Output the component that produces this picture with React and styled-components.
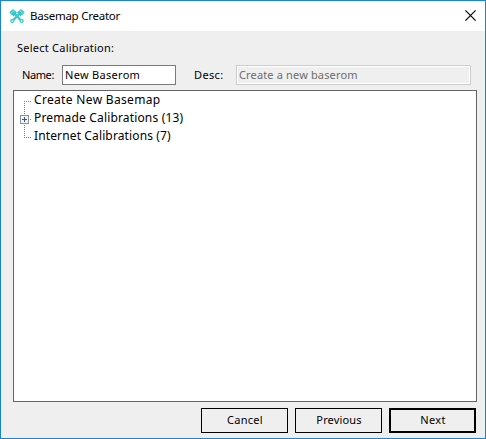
import React from "react";
import styled, { createGlobalStyle } from "styled-components";

const Global = createGlobalStyle`
  * { box-sizing: border-box; }
  body { margin: 0; overflow: hidden; }
`;

const Window = styled.div`
  width: 486px;
  height: 439px;
  display: flex;
  flex-direction: column;
  border: 1px solid #1883d7;
  background: #efefef;
  color: #000;
  font: 11px/18px "Noto Sans", sans-serif;
`;

const Text = styled.span`
  display: block;
  white-space: pre;
  letter-spacing: ${(p) => p.$tracking || 0}px;
`;

const TitleBar = styled.header`
  height: 30px;
  display: flex;
  align-items: center;
  padding: 0 9px 0 8px;
  background: #fff;
  font-size: 11.5px;
`;

const Title = styled(Text)`
  flex: 1;
  margin-left: 5px;
`;

const CloseButton = styled.button`
  width: 11px;
  height: 11px;
  margin-top: -1px;
  padding: 0;
  border: 0;
  background: none;
  svg { display: block; }
`;

const Heading = styled.div`
  height: 34px;
  padding: 8px 0 0 16px;
`;

const Form = styled.div`
  height: 20px;
  display: flex;
  align-items: center;
  padding-left: 21px;
`;

const FieldLabel = styled(Text)`
  width: ${(p) => p.$width}px;
`;

const Field = styled.div`
  width: ${(p) => p.$width}px;
  height: 20px;
  display: flex;
  align-items: center;
  padding-left: 2px;
  border: 1px solid ${(p) => (p.$disabled ? "#cccccc" : "#7a7a7a")};
  background: ${(p) => (p.$disabled ? "#efefef" : "#fff")};
  box-shadow: ${(p) => (p.$disabled ? "inset 0 0 0 1px #fff" : "none")};
  color: ${(p) => (p.$disabled ? "#6d6d6d" : "#000")};
  margin-right: ${(p) => p.$gap || 0}px;
`;

const Tree = styled.div`
  width: 464px;
  height: 312px;
  margin: 5px 0 0 12px;
  border: 1px solid #646464;
  background: #fff;
  font-size: 12px;
`;

const TreeRow = styled.div`
  height: 18px;
  display: flex;
  padding-left: 6px;
  svg { flex: none; }
`;

const Footer = styled.footer`
  display: flex;
  justify-content: flex-end;
  gap: 7px;
  padding: 6px 9px 0 0;
`;

const Button = styled.button`
  width: 87px;
  height: 25px;
  display: flex;
  align-items: center;
  justify-content: center;
  padding: 0 0 1px 1px;
  border: ${(p) => (p.$primary ? 2 : 1)}px solid #000;
  background: #efefef;
  color: #000;
  font: inherit;
`;

const PistonIcon = () => (
  <svg width="16" height="16" viewBox="0 0 16 16">
    <path d="M5 5L12 12.5M11 5L4 12.5" stroke="#35c9cb" strokeWidth="2.3" />
    <path fill="#2fc8ca" d="M.4 4.2L4 1L8 4.6L4.6 8.6L3.6 7.2L2.6 7ZM15.6 4.2L12 1L8 4.6L11.4 8.6L12.4 7.2L13.4 7Z" />
    <path stroke="#a8ecec" strokeWidth=".9" d="M2 5.4L5.4 2.4M14 5.4L10.6 2.4" />
    <g fill="#fff" stroke="#45cfd0" strokeWidth="1.5">
      <circle cx="3.3" cy="13" r="1.4" />
      <circle cx="12.7" cy="13" r="1.4" />
    </g>
  </svg>
);

const CloseIcon = () => (
  <svg width="11" height="11" viewBox="0 0 11 11">
    <path d="M.4 .4L10.6 10.6M10.6 .4L.4 10.6" stroke="#000" strokeWidth="1.15" />
  </svg>
);

const Branch = ({ kind }) => (
  <svg width="14" height="18" viewBox="0 0 14 18" shapeRendering="crispEdges">
    <g stroke="#808080" strokeDasharray="1 1" fill="none">
      {kind !== "first" && <path d="M4.5 0V11" />}
      {kind !== "last" && <path d="M4.5 10V18" />}
      <path d="M4 10.5H11" />
    </g>
    {kind === "node" && (
      <g>
        <rect x=".5" y="6.5" width="8" height="8" fill="#f4f4f4" stroke="#919191" />
        <path d="M2 10.5H7M4.5 8V13" stroke="#3c5096" />
      </g>
    )}
  </svg>
);

const items = [
  { label: "Create New Basemap", kind: "first", tracking: 0.33 },
  { label: "Premade Calibrations (13)", kind: "node", tracking: 0.16 },
  { label: "Internet Calibrations (7)", kind: "last", tracking: 0.13 },
];

export default function App() {
  return (
    <>
      <Global />
      <Window>
        <TitleBar>
          <PistonIcon />
          <Title $tracking={-0.25}>Basemap Creator</Title>
          <CloseButton aria-label="Close"><CloseIcon /></CloseButton>
        </TitleBar>
        <Heading><Text $tracking={0.24}>Select Calibration:</Text></Heading>
        <Form>
          <FieldLabel $width={40} $tracking={-0.4}>Name:</FieldLabel>
          <Field $width={114} $gap={18}><Text $tracking={0.3}>New Baserom</Text></Field>
          <FieldLabel $width={42} $tracking={0.35}>Desc:</FieldLabel>
          <Field $width={235} $disabled><Text $tracking={0.15}>Create a new baserom</Text></Field>
        </Form>
        <Tree>
          {items.map((item) => (
            <TreeRow key={item.label}>
              <Branch kind={item.kind} />
              <Text $tracking={item.tracking}>{item.label}</Text>
            </TreeRow>
          ))}
        </Tree>
        <Footer>
          <Button><Text $tracking={0.3}>Cancel</Text></Button>
          <Button><Text $tracking={0.15}>Previous</Text></Button>
          <Button $primary><Text $tracking={0.3}>Next</Text></Button>
        </Footer>
      </Window>
    </>
  );
}
